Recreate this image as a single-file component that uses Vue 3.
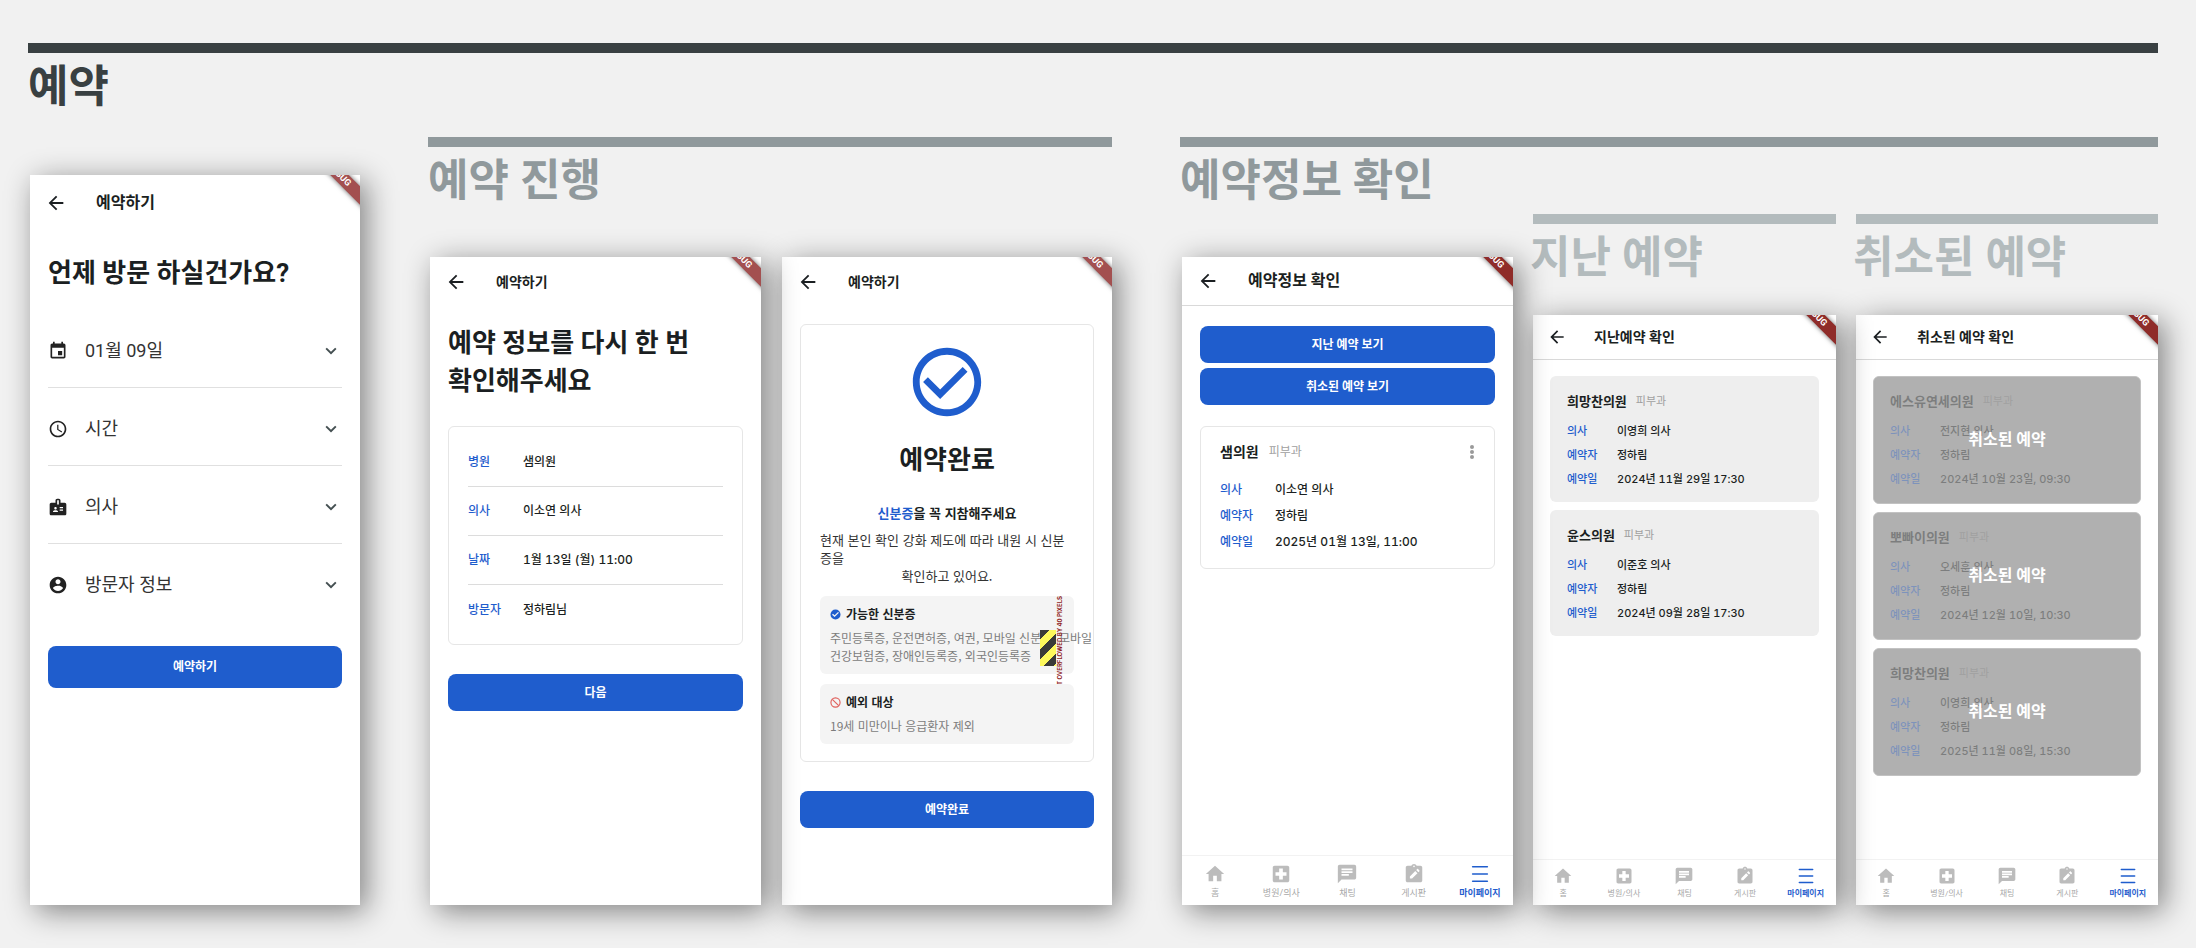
<script setup>
const icons = {
  back: 'M20 11H7.83l5.59-5.59L12 4l-8 8 8 8 1.41-1.41L7.83 13H20v-2z',
  event: 'M17 12h-5v5h5v-5zM16 1v2H8V1H6v2H5c-1.11 0-1.99.9-1.99 2L3 19c0 1.1.89 2 2 2h14c1.1 0 2-.9 2-2V5c0-1.1-.9-2-2-2h-1V1h-2zm3 18H5V8h14v11z',
  clock: 'M11.99 2C6.47 2 2 6.48 2 12s4.47 10 9.99 10C17.52 22 22 17.52 22 12S17.52 2 11.99 2zM12 20c-4.42 0-8-3.58-8-8s3.58-8 8-8 8 3.58 8 8-3.58 8-8 8zm.5-13H11v6l5.25 3.15.75-1.23-4.5-2.67z',
  badge: 'M20 7h-5V4c0-1.1-.9-2-2-2h-2c-1.1 0-2 .9-2 2v3H4c-1.1 0-2 .9-2 2v11c0 1.1.9 2 2 2h16c1.1 0 2-.9 2-2V9c0-1.1-.9-2-2-2zM9 12c.83 0 1.5.67 1.5 1.5S9.83 15 9 15s-1.5-.67-1.5-1.5S8.17 12 9 12zm3 6H6v-.75c0-1 2-1.5 3-1.5s3 .5 3 1.5V18zm1-9h-2V4h2v5zm5 7.5h-4V15h4v1.5zm0-3h-4V12h4v1.5z',
  person: 'M12 2C6.48 2 2 6.48 2 12s4.48 10 10 10 10-4.48 10-10S17.52 2 12 2zm0 3c1.66 0 3 1.34 3 3s-1.34 3-3 3-3-1.34-3-3 1.34-3 3-3zm0 14.2c-2.5 0-4.71-1.28-6-3.22.03-1.99 4-3.08 6-3.08 1.99 0 5.97 1.09 6 3.08-1.29 1.94-3.5 3.22-6 3.22z',
  chevron: 'M7 8.100 12 13l5-4.900L18.600 9.700 12 16.300 5.400 9.700z',
  doneCircle: 'M12 2C6.48 2 2 6.48 2 12s4.48 10 10 10 10-4.48 10-10S17.52 2 12 2zm0 18c-4.41 0-8-3.59-8-8s3.59-8 8-8 8 3.59 8 8-3.59 8-8 8zm4.59-12.42L10 14.17l-3.59-3.58L5 12l5 5 8-8z',
  check: 'M12 1a11 11 0 1 0 0 22 11 11 0 0 0 0-22zm-2 16.5-5.5-5.2 2-2 3.5 3.3 7.5-7.2 2 2z',
  home: 'M10 20v-6h4v6h5v-8h3L12 3 2 12h3v8z',
  hospital: 'M19 3H5c-1.1 0-1.99.9-1.99 2L3 19c0 1.1.9 2 2 2h14c1.1 0 2-.9 2-2V5c0-1.1-.9-2-2-2zm-1 11h-4v4h-4v-4H6v-4h4V6h4v4h4v4z',
  chat: 'M20 2H4c-1.1 0-1.99.9-1.99 2L2 22l4-4h14c1.1 0 2-.9 2-2V4c0-1.1-.9-2-2-2zM6 9h12v2H6V9zm8 5H6v-2h8v2zm4-6H6V6h12v2z',
  board: 'M19 3h-4.2C14.4 1.8 13.3 1 12 1s-2.4.8-2.8 2H5c-1.1 0-2 .9-2 2v14c0 1.1.9 2 2 2h14c1.1 0 2-.9 2-2V5c0-1.1-.9-2-2-2zM12 2.8a.9.9 0 1 1 0 1.8.9.9 0 0 1 0-1.8zM7.5 17v-2.4l5.9-5.9 2.4 2.4L9.9 17H7.5zm9.3-6.9-2.4-2.4 1.1-1.1c.3-.3.7-.3.9 0l1.5 1.5c.3.3.3.7 0 .9l-1.1 1.1z',
  menu: 'M4 3.200h16a.9.9 0 0 1 0 1.800H4a.9.9 0 0 1 0-1.800zM4 11.100h16a.9.9 0 0 1 0 1.800H4a.9.9 0 0 1 0-1.800zM4 19h16a.9.9 0 0 1 0 1.800H4a.9.9 0 0 1 0-1.800z',
}

const pickers = [
  { icon: 'event', label: '01월 09일' },
  { icon: 'clock', label: '시간' },
  { icon: 'badge', label: '의사' },
  { icon: 'person', label: '방문자 정보' },
]

const summary = [
  ['병원', '샘의원'],
  ['의사', '이소연 의사'],
  ['날짜', '1월 13일 (월) 11:00'],
  ['방문자', '정하림님'],
]

const booking = (clinic, doctor, date) => ({
  clinic,
  rows: [['의사', doctor], ['예약자', '정하림'], ['예약일', date]],
})

const current = booking('샘의원', '이소연 의사', '2025년 01월 13일, 11:00')

const archives = [
  {
    heading: '지난 예약',
    title: '지난예약 확인',
    cancelled: false,
    items: [
      booking('희망찬의원', '이영희 의사', '2024년 11월 29일 17:30'),
      booking('윤스의원', '이준호 의사', '2024년 09월 28일 17:30'),
    ],
  },
  {
    heading: '취소된 예약',
    title: '취소된 예약 확인',
    cancelled: true,
    items: [
      booking('에스유연세의원', '전지현 의사', '2024년 10월 23일, 09:30'),
      booking('뽀빠이의원', '오세훈 의사', '2024년 12월 10일, 10:30'),
      booking('희망찬의원', '이영희 의사', '2025년 11월 08일, 15:30'),
    ],
  },
]

const tabs = [
  { icon: 'home', label: '홈' },
  { icon: 'hospital', label: '병원/의사' },
  { icon: 'chat', label: '채팅' },
  { icon: 'board', label: '게시판' },
  { icon: 'menu', label: '마이페이지', active: true },
]
</script>

<template>
  <main class="board" lang="ko">
    <h1 class="heading main">예약</h1>

    <div class="sections">
      <section class="start">
        <article class="phone tall">
          <div class="corner"><span class="ribbon soft">DEBUG</span></div>
          <header class="appbar">
            <button class="back" type="button" aria-label="뒤로"><svg viewBox="0 0 24 24"><path :d="icons.back" /></svg></button>
            <h2>예약하기</h2>
          </header>
          <div class="content">
            <h3 class="question">언제 방문 하실건가요?</h3>
            <button v-for="p in pickers" :key="p.label" class="picker" type="button" aria-expanded="false">
              <svg class="lead" viewBox="0 0 24 24"><path :d="icons[p.icon]" /></svg>
              <span>{{ p.label }}</span>
              <svg class="chevron" viewBox="0 0 24 24"><path :d="icons.chevron" /></svg>
            </button>
            <button class="primary" type="button">예약하기</button>
          </div>
        </article>
      </section>

      <section class="group">
        <h2 class="heading mid">예약 진행</h2>
        <div class="pair">
          <article class="phone">
            <div class="corner"><span class="ribbon soft">DEBUG</span></div>
            <header class="appbar">
              <button class="back" type="button" aria-label="뒤로"><svg viewBox="0 0 24 24"><path :d="icons.back" /></svg></button>
              <h2>예약하기</h2>
            </header>
            <div class="content">
              <h3 class="question">예약 정보를 다시 한 번<br>확인해주세요</h3>
              <dl class="card summary">
                <div v-for="[k, v] in summary" :key="k"><dt>{{ k }}</dt><dd>{{ v }}</dd></div>
              </dl>
              <button class="primary" type="button">다음</button>
            </div>
          </article>

          <article class="phone under">
            <div class="corner"><span class="ribbon soft">DEBUG</span></div>
            <header class="appbar">
              <button class="back" type="button" aria-label="뒤로"><svg viewBox="0 0 24 24"><path :d="icons.back" /></svg></button>
              <h2>예약하기</h2>
            </header>
            <div class="content">
              <div class="card done">
                <svg class="done-icon" viewBox="0 0 24 24"><path :d="icons.doneCircle" /></svg>
                <h3>예약완료</h3>
                <p class="bring"><em>신분증</em>을 꼭 지참해주세요</p>
                <p class="reason">현재 본인 확인 강화 제도에 따라 내원 시 신분<br>증을</p>
                <p class="reason centered">확인하고 있어요.</p>
                <div class="note">
                  <h4><svg class="ok" viewBox="0 0 24 24"><path fill-rule="evenodd" :d="icons.check" /></svg>가능한 신분증</h4>
                  <p>주민등록증, 운전면허증, 여권, 모바일 신분증, 모바일<br>건강보험증, 장애인등록증, 외국인등록증</p>
                  <span class="stripes"></span>
                  <span class="overflow">T OVERFLOWED BY 40 PIXELS</span>
                </div>
                <div class="note">
                  <h4>
                    <svg class="no" viewBox="0 0 24 24"><circle cx="12" cy="12" r="10" /><path d="M5 5l14 14" /></svg>예외 대상
                  </h4>
                  <p>19세 미만이나 응급환자 제외</p>
                </div>
              </div>
              <button class="primary" type="button">예약완료</button>
            </div>
          </article>
        </div>
      </section>

      <section class="group">
        <h2 class="heading mid">예약정보 확인</h2>
        <div class="trio">
          <article class="phone">
            <div class="corner"><span class="ribbon">DEBUG</span></div>
            <header class="appbar lined">
              <button class="back" type="button" aria-label="뒤로"><svg viewBox="0 0 24 24"><path :d="icons.back" /></svg></button>
              <h2>예약정보 확인</h2>
            </header>
            <div class="content links">
              <button class="primary" type="button">지난 예약 보기</button>
              <button class="primary" type="button">취소된 예약 보기</button>
              <div class="card booking">
                <h3>{{ current.clinic }}<small>피부과</small>
                  <button class="more" type="button" aria-label="더보기"><svg viewBox="0 0 6 16"><circle cx="3" cy="3" r="2" /><circle cx="3" cy="8" r="2" /><circle cx="3" cy="13" r="2" /></svg></button>
                </h3>
                <dl>
                  <div v-for="[k, v] in current.rows" :key="k"><dt>{{ k }}</dt><dd>{{ v }}</dd></div>
                </dl>
              </div>
            </div>
            <nav class="tabs">
              <a v-for="t in tabs" :key="t.label" href="#" :class="{ active: t.active }">
                <svg viewBox="0 0 24 24"><path fill-rule="evenodd" :d="icons[t.icon]" /></svg>{{ t.label }}
              </a>
            </nav>
          </article>

          <section v-for="(a, i) in archives" :key="a.title" class="archive" :class="{ last: i === 1 }">
            <h3 class="heading sub">{{ a.heading }}</h3>
            <article class="phone small">
              <div class="corner"><span class="ribbon">DEBUG</span></div>
              <header class="appbar lined">
                <button class="back" type="button" aria-label="뒤로"><svg viewBox="0 0 24 24"><path :d="icons.back" /></svg></button>
                <h2>{{ a.title }}</h2>
              </header>
              <div class="content">
                <div v-for="b in a.items" :key="b.clinic" class="booking filled" :class="{ cancelled: a.cancelled }">
                  <h3>{{ b.clinic }}<small>피부과</small></h3>
                  <dl>
                    <div v-for="[k, v] in b.rows" :key="k"><dt>{{ k }}</dt><dd>{{ v }}</dd></div>
                  </dl>
                  <div v-if="a.cancelled" class="veil">취소된 예약</div>
                </div>
              </div>
              <nav class="tabs">
                <a v-for="t in tabs" :key="t.label" href="#" :class="{ active: t.active }">
                  <svg viewBox="0 0 24 24"><path fill-rule="evenodd" :d="icons[t.icon]" /></svg>{{ t.label }}
                </a>
              </nav>
            </article>
          </section>
        </div>
      </section>
    </div>
  </main>
</template>

<style>
body {
  margin: 0;
  background: #f1f1f1;
}
</style>

<style scoped>
* {
  box-sizing: border-box;
}

h1, h2, h3, h4, p, dl, dd {
  margin: 0;
}

button {
  padding: 0;
  border: 0;
  background: none;
  font: inherit;
  color: inherit;
}

svg {
  display: block;
  flex: none;
  fill: currentColor;
}

.board {
  display: flex;
  flex-direction: column;
  min-height: 100vh;
  padding: 43px 38px 43px 28px;
  font-family: Roboto, "Noto Sans CJK KR", sans-serif;
  color: #1b1f22;
}

.heading {
  border-top: 10px solid;
  padding-top: 8px;
  font-size: 44px;
  line-height: 52px;
  font-weight: 700;
  white-space: nowrap;
}

.main {
  height: 94px;
  color: #394042;
}

.mid {
  height: 77px;
  color: #90999c;
}

.sub {
  height: 101px;
  color: #b3bbbd;
  text-indent: -3px;
}

.sections {
  flex: 1;
  display: grid;
  grid-template-columns: minmax(0, 332fr) minmax(0, 684fr) minmax(0, 978fr);
  column-gap: 68px;
}

.start {
  display: flex;
  padding: 38px 0 0 2px;
}

.group {
  display: flex;
  flex-direction: column;
}

.pair, .trio {
  flex: 1;
  display: grid;
  padding-left: 2px;
}

.pair {
  grid-template-columns: minmax(0, 331fr) minmax(0, 330fr);
  column-gap: 21px;
  padding-top: 43px;
}

.trio {
  grid-template-columns: minmax(0, 331fr) minmax(0, 303fr) minmax(0, 302fr);
  column-gap: 20px;
}

.trio > .phone {
  margin-top: 43px;
}

.archive {
  position: relative;
  z-index: 2;
  display: flex;
  flex-direction: column;
}

.archive.last {
  z-index: 1;
}

.phone {
  position: relative;
  z-index: 3;
  flex: 1;
  display: flex;
  flex-direction: column;
  background: #fff;
  box-shadow: 6px 6px 28px rgba(0, 0, 0, 0.47);
}

.phone.under {
  z-index: 2;
}

.corner {
  position: absolute;
  top: 0;
  right: 0;
  width: 40px;
  height: 40px;
  overflow: hidden;
}

.ribbon {
  position: absolute;
  top: 4px;
  left: 0;
  width: 60px;
  height: 13px;
  padding-right: 31px;
  transform: rotate(45deg);
  background: #8f2c29;
  box-shadow: 0 0 5px rgba(0, 0, 0, 0.6);
  color: #fff;
  font-size: 9px;
  line-height: 13px;
  font-weight: 700;
  text-align: right;
}

.ribbon.soft {
  background: #a35050;
}

.appbar {
  display: flex;
  align-items: center;
  height: 49px;
  padding-left: 15px;
}

.appbar.lined {
  border-bottom: 1px solid #d9d9d9;
}

.back svg {
  width: 22px;
  height: 22px;
}

.appbar h2 {
  margin-left: 29px;
  font-size: 14px;
  line-height: 20px;
  font-weight: 700;
}

.appbar.lined h2, .tall .appbar h2 {
  font-size: 16px;
}

.tall .appbar {
  height: 56px;
}

.content {
  flex: 1;
  display: flex;
  flex-direction: column;
  padding: 18px 18px 0;
}

.question {
  margin-bottom: 26px;
  font-size: 26px;
  line-height: 38px;
  font-weight: 700;
  white-space: nowrap;
}

.tall .content {
  padding-top: 23px;
}

.tall .question {
  margin-bottom: 18px;
}

.picker {
  display: flex;
  align-items: center;
  height: 78px;
  padding: 4px 1px 0 0;
  border-bottom: 1px solid #e0e0e0;
  font-size: 18px;
  line-height: 24px;
  color: #333;
}

.picker:nth-of-type(4) {
  border-bottom-color: transparent;
}

.lead {
  width: 20px;
  height: 20px;
  color: #222;
}

.picker span {
  flex: 1;
  margin-left: 17px;
  text-align: left;
}

.chevron {
  width: 20px;
  height: 20px;
  color: #455052;
}

.primary {
  flex: none;
  height: 37px;
  margin-top: 29px;
  border-radius: 8px;
  background: #1f5dcd;
  color: #fff;
  font-size: 12px;
  line-height: 18px;
  font-weight: 700;
}

.tall .primary {
  height: 42px;
  margin-top: 24px;
}

.card {
  border: 1px solid #e6e6e6;
  border-radius: 6px;
}

.summary {
  padding: 11px 19px 10px;
}

.summary div {
  display: flex;
  align-items: center;
  height: 49px;
  border-bottom: 1px solid #dcdcdc;
}

.summary div:last-child {
  border-bottom: 0;
}

dl {
  font-family: Inter, "Noto Sans CJK KR", sans-serif;
  font-size: 12px;
  line-height: 18px;
  font-weight: 500;
  font-variant-numeric: tabular-nums;
}

dt {
  width: 55px;
  color: #1f5dcd;
}

.done {
  padding: 16px 19px 17px;
  font-family: "Noto Sans CJK KR", sans-serif;
}

.done-icon {
  width: 82px;
  height: 82px;
  margin: 0 auto;
  color: #1f5dcd;
}

.done h3 {
  margin-top: 16px;
  font-size: 26px;
  line-height: 38px;
  text-align: center;
}

.bring {
  margin: 27px 0 9px;
  font-size: 13px;
  line-height: 18px;
  font-weight: 700;
  text-align: center;
}

.bring em {
  font-style: normal;
  color: #1f5dcd;
}

.reason {
  font-size: 13px;
  line-height: 18px;
  white-space: nowrap;
  color: #333;
}

.centered {
  margin-bottom: 11px;
  text-align: center;
}

.note {
  position: relative;
  padding: 9px 10px;
  border-radius: 6px;
  background: #f4f4f4;
  font-size: 12px;
  line-height: 18px;
}

.note + .note {
  margin-top: 10px;
}

.note h4 {
  display: flex;
  align-items: center;
  gap: 5px;
  margin-bottom: 6px;
  font-size: 12px;
}

.note p {
  color: #7c7c7c;
  white-space: nowrap;
}

.note svg {
  width: 11px;
  height: 11px;
}

.ok {
  color: #1f5dcd;
}

.no {
  fill: none;
  stroke: #e0605c;
  stroke-width: 2.5;
}

.stripes {
  position: absolute;
  top: 34px;
  right: 18px;
  width: 16px;
  height: 36px;
  background: repeating-linear-gradient(135deg, #3a3a38 0 7px, #fdf85c 7px 14px);
}

.overflow {
  position: absolute;
  top: 0;
  right: 10px;
  writing-mode: vertical-rl;
  transform: rotate(180deg);
  font-family: Inter, sans-serif;
  font-size: 6px;
  line-height: 8px;
  font-weight: 700;
  color: #8f1d1d;
  white-space: nowrap;
}

.links {
  padding-top: 20px;
}

.links .primary {
  margin: 0 0 5px;
}

.links .card {
  margin-top: 16px;
}

.booking {
  padding: 15px 19px 13px;
}

.booking h3 {
  display: flex;
  align-items: center;
  margin-bottom: 15px;
  font-size: 14px;
  line-height: 20px;
  font-weight: 700;
}

.booking small {
  margin-left: 10px;
  font-size: 12px;
  font-weight: 400;
  color: #a0a0a0;
}

.more {
  margin-left: auto;
  color: #9a9a9a;
}

.more svg {
  width: 6px;
  height: 16px;
}

.booking dl {
  line-height: 26px;
}

.booking dl div {
  display: flex;
}

.tabs {
  display: grid;
  grid-template-columns: repeat(5, minmax(0, 1fr));
  border-top: 1px solid #f2f2f2;
}

.tabs a {
  display: flex;
  flex-direction: column;
  align-items: center;
  padding: 7px 0 4px;
  font-size: 9px;
  line-height: 16px;
  color: #a8a8a8;
  text-decoration: none;
  white-space: nowrap;
}

.tabs svg {
  width: 22px;
  height: 22px;
  color: #bcbcbc;
}

.tabs .active, .tabs .active svg {
  color: #1f5dcd;
}

.tabs .active {
  font-weight: 700;
}

.small .appbar {
  height: 45px;
  padding-left: 14px;
}

.small .back svg {
  width: 20px;
  height: 20px;
}

.small .appbar h2 {
  margin-left: 27px;
  font-size: 14px;
}

.small .content {
  gap: 8px;
  padding: 16px 17px 0;
}

.small .booking {
  position: relative;
  padding: 16px 17px 11px;
  border-radius: 6px;
  background: #eee;
}

.small .booking h3 {
  margin-bottom: 7px;
  font-size: 13px;
}

.small .booking small {
  margin-left: 9px;
  font-size: 11px;
}

.small .booking dl {
  font-size: 11px;
  line-height: 24px;
}

.small dt {
  width: 50px;
}

.small .cancelled {
  border: 1px solid #c2c2c2;
  padding: 15px 16px 12px;
  background: #b0b0b0;
}

.small .cancelled small {
  color: #808080;
}

.veil {
  position: absolute;
  inset: 0;
  display: flex;
  align-items: center;
  justify-content: center;
  padding-bottom: 4px;
  border-radius: 5px;
  background: rgba(176, 176, 176, 0.65);
  color: #fff;
  font-size: 16px;
  font-weight: 700;
}

.small .tabs a {
  padding: 6px 0 3px;
  font-size: 8px;
}

.small .tabs svg {
  width: 20px;
  height: 20px;
}
</style>
